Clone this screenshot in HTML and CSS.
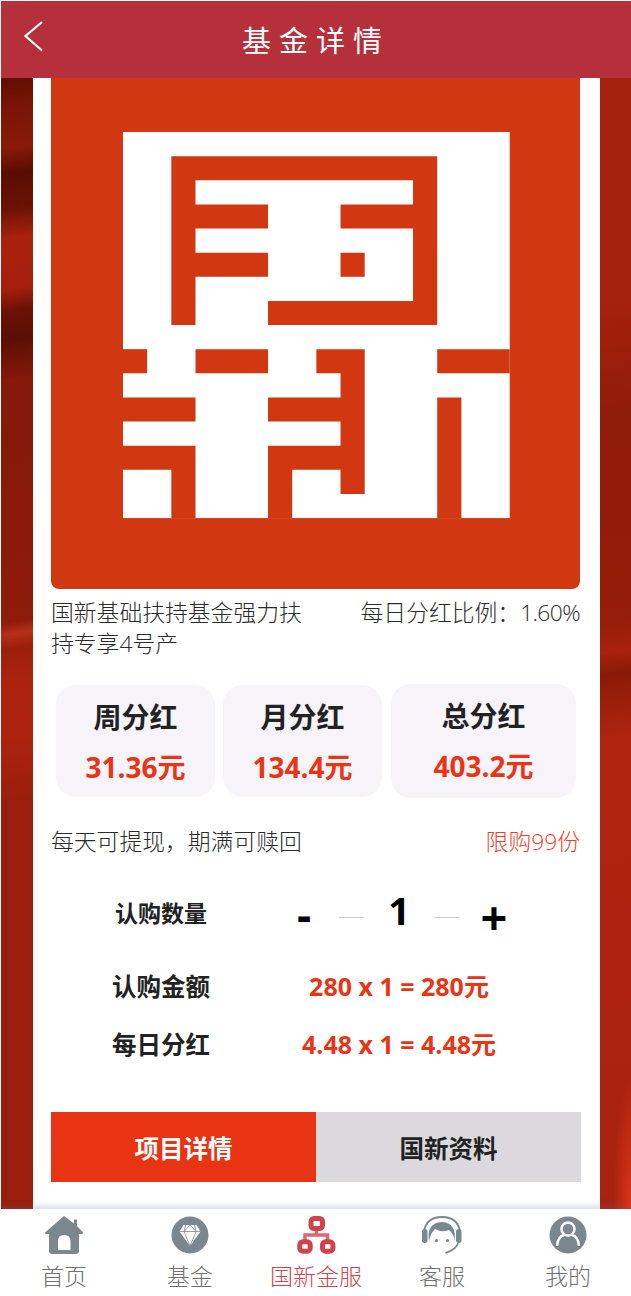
FILE: index.html
```html
<!DOCTYPE html>
<html lang="zh-CN">
<head>
    <meta charset="UTF-8">
    <meta name="viewport" content="width=device-width, initial-scale=1.0">
    <title>基金详情</title>
    <link rel="stylesheet" href="styles.css">
</head>
<body>
    <div class="page">
        <header class="top-bar">
            <svg class="back-icon" width="24" height="34" viewBox="0 0 24 34"><path d="M19 3 L2.500 17 L19 31.500" fill="none" stroke="#fff" stroke-width="2.200"/></svg>
            <h1 class="top-title">基金详情</h1>
        </header>

        <main class="content">
            <div class="card">
                <div class="logo">
                    <svg width="529" height="511" viewBox="0 0 529 511">
                        <g transform="translate(72 54) scale(24.17 24.13)">
                            <rect width="16" height="16" fill="#fff"/>
                            <path fill="#d13710" d="M2 1H13V8H6V7H12V4H9V3H12V2H3V3H6V4H3V5H6V6H3V8H2Z"/>
                            <path fill="#d13710" d="M9 5H10V6H9Z"/>
                            <path fill="#d13710" d="M0 9H1V10H0Z"/>
                            <path fill="#d13710" d="M3 9H6V10H3Z"/>
                            <path fill="#d13710" d="M8 9H10V15H9V14H7V16H6V13H9V12H6V11H9V10H8Z"/>
                            <path fill="#d13710" d="M13 9H16V10H13Z"/>
                            <path fill="#d13710" d="M0 11H3V12H0Z"/>
                            <path fill="#d13710" d="M0 13H3V16H2V14H0Z"/>
                            <path fill="#d13710" d="M13 11H14V16H13Z"/>
                        </g>
                    </svg>
                </div>

                <div class="info-row">
                    <div class="fund-name">国新基础扶持基金强力扶持专享4号产</div>
                    <div class="fund-rate">每日分红比例：<span class="rate-num">1.60%</span></div>
                </div>

                <div class="stats">
                    <div class="stat">
                        <div class="stat-title">周分红</div>
                        <div class="stat-value">31.36元</div>
                    </div>
                    <div class="stat">
                        <div class="stat-title">月分红</div>
                        <div class="stat-value">134.4元</div>
                    </div>
                    <div class="stat stat-wide">
                        <div class="stat-title">总分红</div>
                        <div class="stat-value">403.2元</div>
                    </div>
                </div>

                <div class="note-row">
                    <span>每天可提现，期满可赎回</span>
                    <span class="note-limit">限购99份</span>
                </div>

                <div class="form-row form-row-qty">
                    <div class="form-label">认购数量</div>
                    <div class="stepper">
                        <span class="step-btn step-minus">-</span>
                        <span class="step-line"></span>
                        <span class="step-num">1</span>
                        <span class="step-line"></span>
                        <span class="step-btn step-plus">+</span>
                    </div>
                </div>
                <div class="form-row">
                    <div class="form-label">认购金额</div>
                    <div class="form-value">280 x 1 = 280元</div>
                </div>
                <div class="form-row">
                    <div class="form-label">每日分红</div>
                    <div class="form-value">4.48 x 1 = 4.48元</div>
                </div>

                <div class="tabs">
                    <div class="tab tab-active">项目详情</div>
                    <div class="tab">国新资料</div>
                </div>
            </div>
        </main>

        <nav class="bottom-nav">
            <div class="nav-item">
                <svg class="nav-icon" width="40" height="40" viewBox="0 0 40 40">
                    <path fill="#7a878f" d="M20 1 L30 8.500 V4.500 H33 V11 L39 17.500 Q39.500 19 37 19 H35 V36 Q35 39 32 39 H8 Q5 39 5 36 V19 H3 Q.5 19 1 17.500 Z"/>
                    <path fill="#fff" d="M14 35 V26 Q14 20 20 20 Q26.500 20 26.500 26 V35 Z"/>
                </svg>
                <span>首页</span>
            </div>
            <div class="nav-item">
                <svg class="nav-icon" width="40" height="40" viewBox="0 0 40 40">
                    <circle cx="20" cy="20" r="18.500" fill="#7a878f"/>
                    <path fill="#fff" d="M13.500 10 H26.500 L30.500 16.500 L20 31 L9.500 16.500 Z"/>
                    <path fill="none" stroke="#7a878f" stroke-width=".8" d="M9.500 16.500 H30.500 M15.500 10 L14 16.500 L20 31 L26 16.500 L24.500 10 M14 16.500 L20 10 L26 16.500"/>
                </svg>
                <span>基金</span>
            </div>
            <div class="nav-item nav-item-active">
                <svg class="nav-icon" width="40" height="40" viewBox="0 0 40 40">
                    <path fill="none" stroke="#e0686c" stroke-width="3.500" d="M20.500 14 V20 H9 V26 M20.500 20 H31.500 V26"/>
                    <rect x="15" y="3.500" width="11.500" height="10" rx="3" fill="none" stroke="#cf444c" stroke-width="5"/>
                    <rect x="3.800" y="26.800" width="10.400" height="9.400" rx="3" fill="none" stroke="#cf444c" stroke-width="5"/>
                    <rect x="26.500" y="26.800" width="10.400" height="9.400" rx="3" fill="none" stroke="#cf444c" stroke-width="5"/>
                </svg>
                <span>国新金服</span>
            </div>
            <div class="nav-item">
                <svg class="nav-icon" width="40" height="40" viewBox="0 0 40 40">
                    <path fill="none" stroke="#7a878f" stroke-width="1.800" d="M2 17 Q4 2 20 2 Q36 2 38 17"/>
                    <path fill="#7a878f" d="M7 26 Q4 8 20 7 Q35 8 32.500 26 Q32 19 27 15 Q20 18 13 14 Q8.500 18 7 26 Z"/>
                    <rect x="0" y="14" width="5.500" height="14" rx="2.700" fill="#7a878f"/>
                    <rect x="34" y="14" width="5.500" height="14" rx="2.700" fill="#7a878f"/>
                    <circle cx="14.500" cy="25.500" r="1.600" fill="#7a878f"/>
                    <circle cx="25.500" cy="25.500" r="1.600" fill="#7a878f"/>
                    <path fill="none" stroke="#7a878f" stroke-width="1.600" d="M36 28 Q35 34 23.500 38"/>
                </svg>
                <span>客服</span>
            </div>
            <div class="nav-item">
                <svg class="nav-icon" width="40" height="40" viewBox="0 0 40 40">
                    <circle cx="20" cy="20" r="18.500" fill="#7a878f"/>
                    <circle cx="20" cy="14" r="6.500" fill="none" stroke="#fff" stroke-width="2.500"/>
                    <path fill="none" stroke="#fff" stroke-width="2.500" d="M9 31 Q10 21 16 20 M31 31 Q30 21 24 20"/>
                </svg>
                <span>我的</span>
            </div>
        </nav>
    </div>
</body>
</html>
```

FILE: styles.css
```css
html, body {
    margin: 0;
    padding: 0;
    background: #fff;
}
body {
    font-family: "Open Sans", "Noto Sans CJK SC", sans-serif;
    color: #2b2b2b;
    overflow: hidden;
}
.page {
    width: 630px;
    height: 1295px;
    margin: 1px 0 0 1px;
    display: flex;
    flex-direction: column;
    overflow: hidden;
}

.top-bar {
    flex: none;
    height: 77px;
    background: #b5303a;
    display: flex;
    align-items: center;
    justify-content: center;
    position: relative;
}
.back-icon {
    position: absolute;
    left: 22px;
    top: 18px;
}
.top-title {
    margin: 0 0 2px;
    color: #fff;
    font-size: 29px;
    font-weight: 400;
    letter-spacing: 8px;
}

/* the photo behind the card only shows in the two side strips */
.content {
    flex: 1;
    min-height: 0;
    overflow: hidden;
    background-repeat: no-repeat;
    background-position: left top, right bottom, right top;
    background-size: 33px 100%, 33px 160px, 33px 100%;
    background-image:
        linear-gradient(172deg, #5f0e02 0, #7a1406 30px, #8a1a08 70px, #5a0d02 95px, #6a1204 130px, #a8210c 160px, #a4200c 210px, #6a1205 232px, #5c0f03 260px, #851809 300px, #8f1b0a 540px, #b5301a 552px, #9c1f0b 566px, #ab230e 600px, #ad230f 650px, #9a1e0b 720px, #9a1e0b 100%),
        radial-gradient(ellipse 18px 130px at 100% 100%, #dc3417 0, rgba(220, 52, 23, 0) 100%),
        linear-gradient(172deg, #a5210d 0, #a5210d 220px, #8f1b09 340px, #951d0a 540px, #a8220e 570px, #8a1a08 592px, #a6220d 640px, #b0240f 655px, #ac230f 950px, #a8230f 100%);
}
.card {
    width: 567px;
    height: 100%;
    margin-left: 32px;
    padding: 0 20px 0 18px;
    box-sizing: border-box;
    background: #fff;
}

.logo {
    height: 511px;
    background: #d13710;
    border-radius: 0 0 8px 8px;
    overflow: hidden;
}
.logo svg {
    display: block;
}

.info-row {
    margin-top: 8px;
    display: flex;
    justify-content: space-between;
    font-size: 22.8px;
    line-height: 31px;
    font-weight: 300;
}
.fund-name {
    width: 254px;
}
.rate-num {
    letter-spacing: -.6px;
}

.stats {
    margin: 25px 5px 0;
    display: flex;
    align-items: center;
    gap: 8px;
}
.stat {
    flex: none;
    width: 159px;
    height: 112px;
    border-radius: 20px;
    background: #f6f3f9;
    text-align: center;
    box-sizing: border-box;
    padding-top: 13px;
}
.stat-wide {
    width: 185px;
    height: 114px;
    margin-left: 1px;
}
.stat-title {
    font-size: 28px;
    line-height: 38px;
    font-weight: 700;
    color: #222;
}
.stat-value {
    margin-top: 12px;
    font-size: 28px;
    line-height: 38px;
    font-weight: 700;
    color: #ea3515;
}

.note-row {
    margin-top: 28px;
    display: flex;
    justify-content: space-between;
    font-size: 22.8px;
    line-height: 31px;
    font-weight: 300;
}
.note-limit {
    color: #ee3f28;
}

.form-row {
    display: grid;
    grid-template-columns: 220px 256px;
    align-items: center;
    height: 58px;
    text-align: center;
}
.form-row-qty {
    margin-top: 27px;
    margin-bottom: 14px;
}
.form-label {
    font-size: 24.5px;
    font-weight: 700;
    color: #222;
}
.form-row-qty .form-label {
    font-size: 23px;
    margin-bottom: 3px;
}
.form-value {
    font-size: 25px;
    font-weight: 700;
    color: #ea3515;
}

.stepper {
    display: flex;
    align-items: center;
    justify-content: center;
    color: #000;
    height: 30px;
    margin-top: 7px;
}
.step-btn {
    flex: none;
    width: 30px;
    line-height: 58px;
    font-weight: 700;
}
.step-minus {
    font-size: 44px;
    margin: 0 20px 5px 0;
}
.step-plus {
    font-size: 47px;
    margin: 1px 0 0 20px;
}
.step-line {
    flex: none;
    width: 25px;
    height: 1px;
    margin-top: 2px;
    background: #ccc;
}
.step-num {
    flex: none;
    width: 70px;
    font-size: 38px;
    line-height: 58px;
    font-weight: 700;
    margin-top: -14px;
}

.tabs {
    margin: 40px -1px 0 0;
    display: flex;
    height: 70px;
}
.tab {
    flex: 1;
    display: flex;
    align-items: center;
    justify-content: center;
    background: #dbd9de;
    color: #222;
    font-size: 24.5px;
    font-weight: 700;
}
.tab-active {
    background: #e83413;
    color: #fff;
}

.bottom-nav {
    flex: none;
    height: 87px;
    display: flex;
    background: #fff;
    box-shadow: 0 -3px 6px rgba(90, 110, 150, .25);
    position: relative;
}
.nav-item {
    width: 126px;
    padding-top: 6px;
    display: flex;
    flex-direction: column;
    align-items: center;
    font-size: 23px;
    line-height: 36px;
    color: #6f6f6f;
    font-weight: 300;
}
.nav-item-active {
    color: #cf444c;
}
.nav-icon {
    display: block;
    margin-bottom: 3px;
}
```
